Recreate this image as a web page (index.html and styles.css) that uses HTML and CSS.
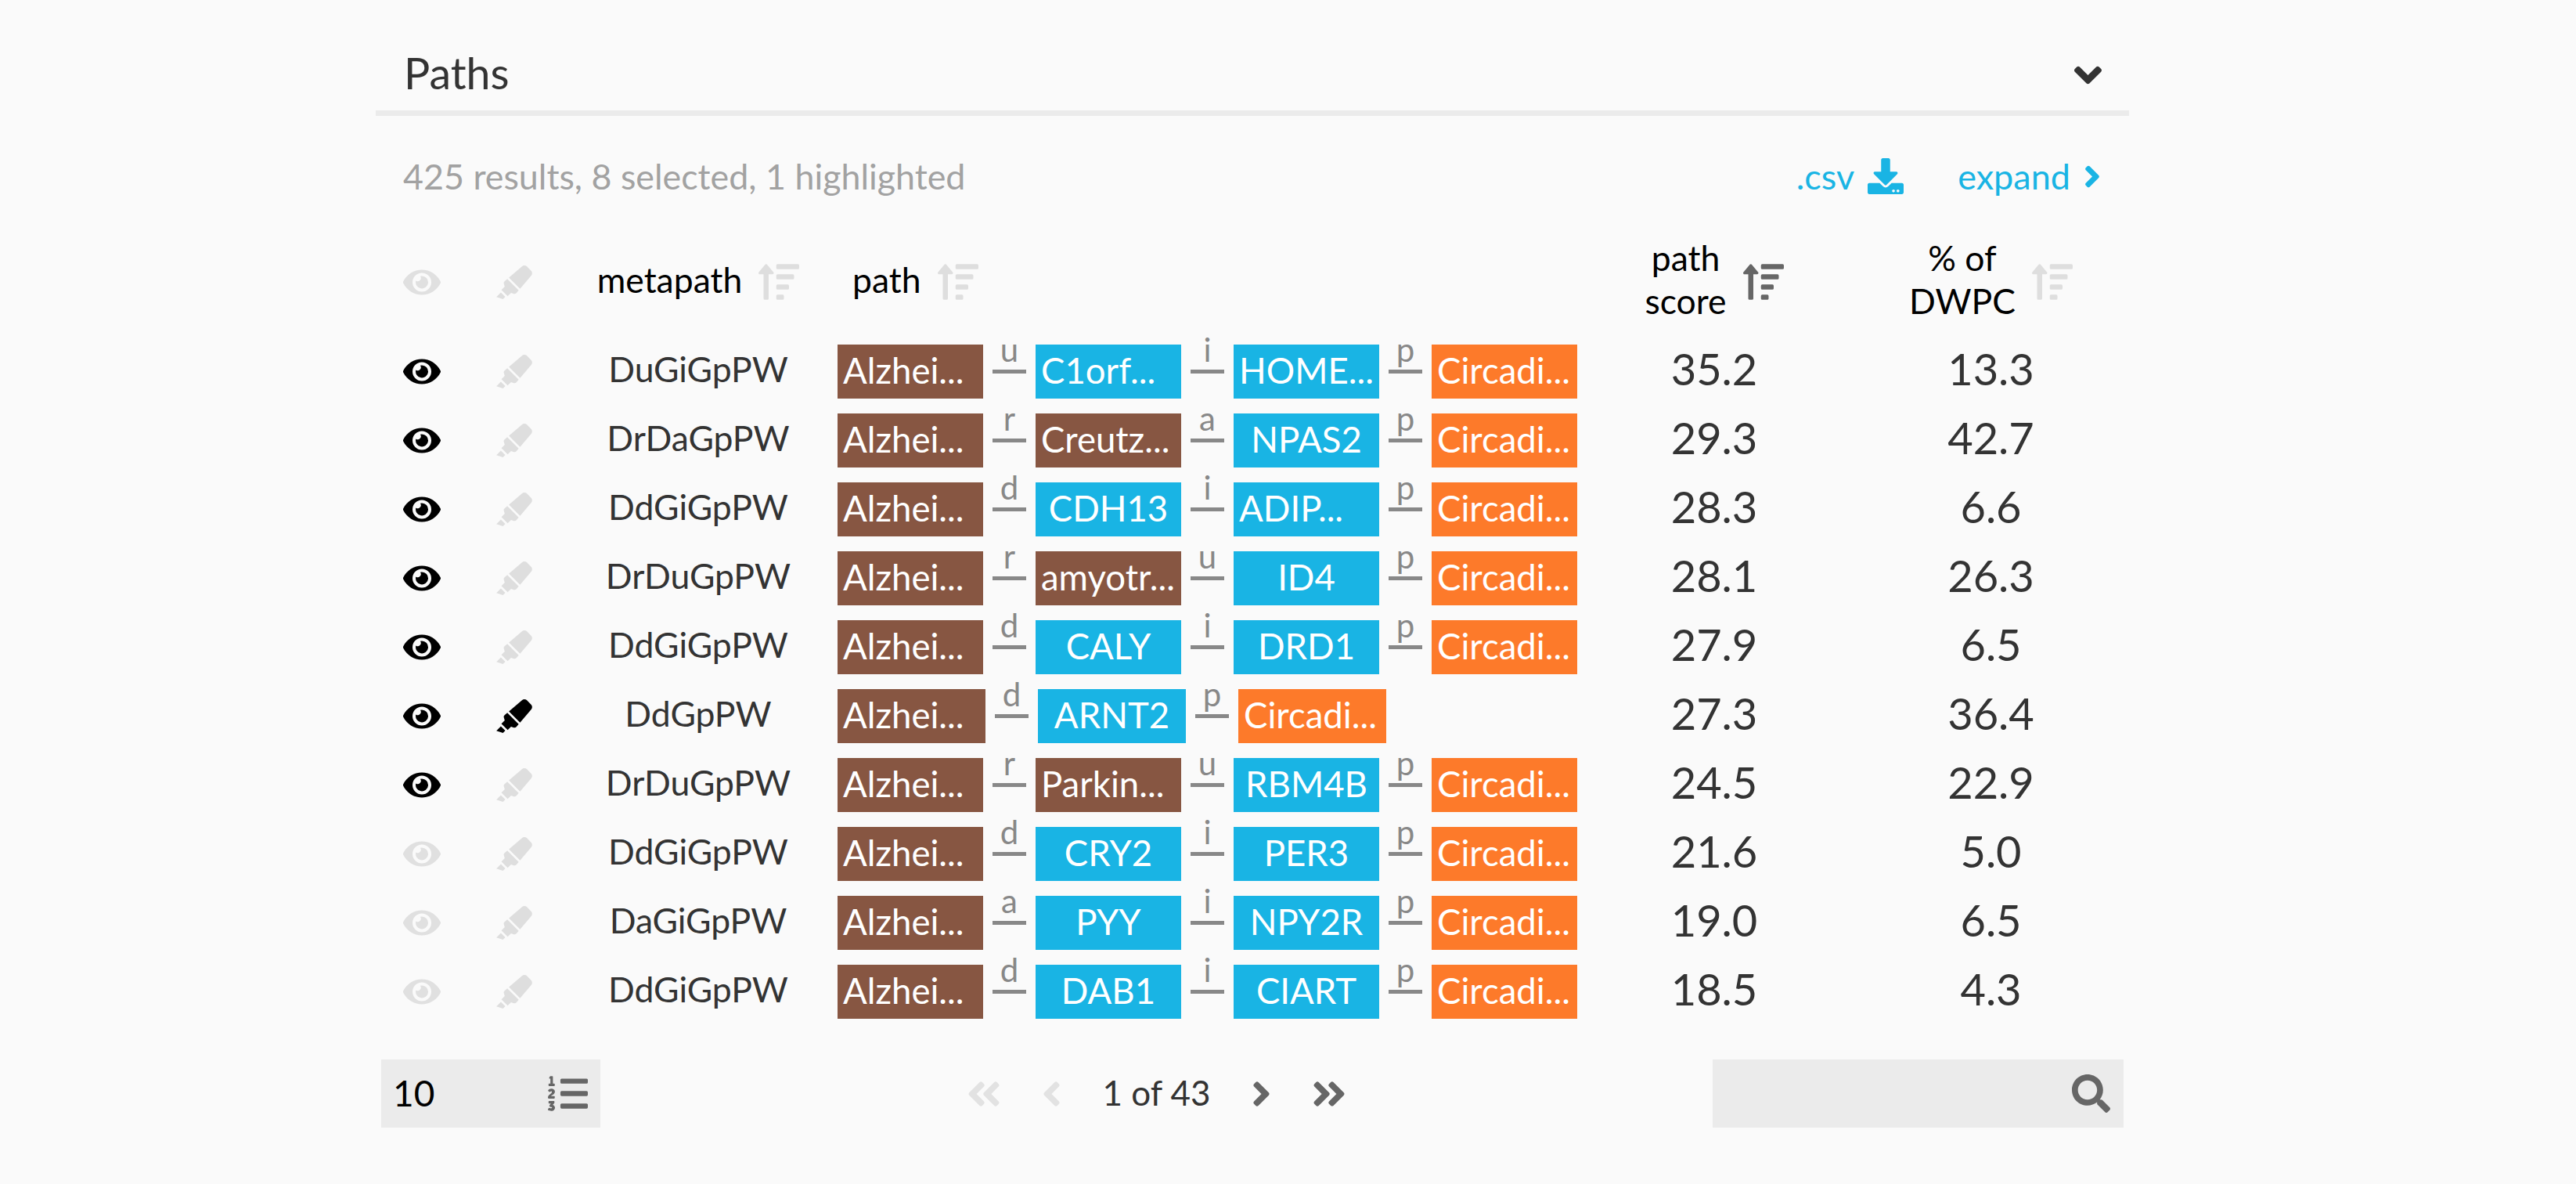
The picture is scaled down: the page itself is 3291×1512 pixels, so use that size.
FILE: index.html
```html
<!DOCTYPE html>
<html>
<head>
    <meta charset="UTF-8">
    <title>Paths</title>
    <link rel="stylesheet" href="styles.css">
</head>
<body>
    <!-- icon set, used below with <use> -->
    <svg class="defs" xmlns="http://www.w3.org/2000/svg">
        <symbol id="eye" viewBox="0 0 576 512"><path d="M572.52 241.4C518.29 135.59 410.93 64 288 64S57.68 135.64 3.48 241.41a32.35 32.35 0 0 0 0 29.19C57.71 376.41 165.07 448 288 448s230.32-71.64 284.52-177.41a32.35 32.35 0 0 0 0-29.19zM288 400a144 144 0 1 1 144-144 143.93 143.93 0 0 1-144 144zm0-240a95.31 95.31 0 0 0-25.31 3.79 47.85 47.85 0 0 1-66.9 66.9A95.78 95.78 0 1 0 288 160z"/></symbol>
        <symbol id="marker" viewBox="0 0 544 512"><path d="M0 479.98L99.92 512l35.45-35.45-67.04-67.04L0 479.98zm124.61-240.01a36.592 36.592 0 0 0-10.79 38.1l13.05 42.83-50.93 50.94 96.23 96.23 50.86-50.86 42.74 13.08c13.73 4.2 28.65-.01 38.15-10.78l35.55-41.64-173.34-173.34-41.52 35.64zm403.31-160.7l-63.2-63.2c-20.49-20.49-53.38-21.52-75.12-2.35L190.55 183.68l169.77 169.78L530.27 154.4c19.18-21.74 18.15-54.63-2.35-75.13z"/></symbol>
        <symbol id="sort" viewBox="0 0 512 512"><path d="M304 416h-64a16 16 0 0 0-16 16v32a16 16 0 0 0 16 16h64a16 16 0 0 0 16-16v-32a16 16 0 0 0-16-16zM16 160h48v304a16 16 0 0 0 16 16h32a16 16 0 0 0 16-16V160h48c14.21 0 21.38-17.24 11.31-27.31l-80-96a16 16 0 0 0-22.62 0l-80 96C-5.35 142.74 1.77 160 16 160zm416 0H240a16 16 0 0 0-16 16v32a16 16 0 0 0 16 16h192a16 16 0 0 0 16-16v-32a16 16 0 0 0-16-16zm-64 128H240a16 16 0 0 0-16 16v32a16 16 0 0 0 16 16h128a16 16 0 0 0 16-16v-32a16 16 0 0 0-16-16zM496 32H240a16 16 0 0 0-16 16v32a16 16 0 0 0 16 16h256a16 16 0 0 0 16-16V48a16 16 0 0 0-16-16z"/></symbol>
        <symbol id="download" viewBox="0 0 512 512"><path d="M216 0h80c13.3 0 24 10.7 24 24v168h87.7c17.8 0 26.7 21.5 14.1 34.1L269.7 378.3c-7.5 7.5-19.8 7.5-27.3 0L90.1 226.1c-12.6-12.6-3.7-34.1 14.1-34.1H192V24c0-13.3 10.7-24 24-24zm296 376v112c0 13.3-10.7 24-24 24H24c-13.3 0-24-10.7-24-24V376c0-13.3 10.7-24 24-24h146.7l49 49c20.1 20.1 52.5 20.1 72.6 0l49-49H488c13.3 0 24 10.7 24 24zm-124 88c0-11-9-20-20-20s-20 9-20 20 9 20 20 20 20-9 20-20zm64 0c0-11-9-20-20-20s-20 9-20 20 9 20 20 20 20-9 20-20z"/></symbol>
        <symbol id="angleDown" viewBox="0 0 320 512"><path d="M143 352.3L7 216.3c-9.4-9.4-9.4-24.6 0-33.9l22.6-22.6c9.4-9.4 24.6-9.4 33.9 0l96.4 96.4 96.4-96.4c9.4-9.4 24.6-9.4 33.9 0l22.6 22.6c9.4 9.4 9.4 24.6 0 33.9l-136 136c-9.2 9.4-24.4 9.4-33.8 0z"/></symbol>
        <symbol id="doubleLeft" viewBox="0 0 448 512"><path d="M223.7 239l136-136c9.4-9.4 24.6-9.4 33.9 0l22.6 22.6c9.4 9.4 9.4 24.6 0 33.9L319.9 256l96.4 96.4c9.4 9.4 9.4 24.6 0 33.9L393.7 409c-9.4 9.4-24.6 9.4-33.9 0l-136-136c-9.5-9.4-9.5-24.6-.1-34zm-192 34l136 136c9.4 9.4 24.6 9.4 33.9 0l22.6-22.6c9.4-9.4 9.4-24.6 0-33.9L127.9 256l96.4-96.4c9.4-9.4 9.4-24.6 0-33.9L201.7 103c-9.4-9.4-24.6-9.4-33.9 0l-136 136c-9.5 9.4-9.5 24.6-.1 34z"/></symbol>
        <symbol id="doubleRight" viewBox="0 0 448 512"><path d="M224.3 273l-136 136c-9.4 9.4-24.6 9.4-33.9 0l-22.6-22.6c-9.4-9.4-9.4-24.6 0-33.9l96.4-96.4-96.4-96.4c-9.4-9.4-9.4-24.6 0-33.9L54.3 103c9.4-9.4 24.6-9.4 33.9 0l136 136c9.5 9.4 9.5 24.6.1 34zm192-34l-136-136c-9.4-9.4-24.6-9.4-33.9 0l-22.6 22.6c-9.4 9.4-9.4 24.6 0 33.9l96.4 96.4-96.4 96.4c-9.4 9.4-9.4 24.6 0 33.9l22.6 22.6c9.4 9.4 24.6 9.4 33.9 0l136-136c9.4-9.2 9.4-24.4 0-33.8z"/></symbol>
        <symbol id="angleLeft" viewBox="0 0 256 512"><path d="M31.7 239l136-136c9.4-9.4 24.6-9.4 33.9 0l22.6 22.6c9.4 9.4 9.4 24.6 0 33.9L127.9 256l96.4 96.4c9.4 9.4 9.4 24.6 0 33.9L201.7 409c-9.4 9.4-24.6 9.4-33.9 0l-136-136c-9.5-9.4-9.5-24.6-.1-34z"/></symbol>
        <symbol id="angleRight" viewBox="0 0 256 512"><path d="M224.3 273l-136 136c-9.4 9.4-24.6 9.4-33.9 0l-22.6-22.6c-9.4-9.4-9.4-24.6 0-33.9l96.4-96.4-96.4-96.4c-9.4-9.4-9.4-24.6 0-33.9L54.3 103c9.4-9.4 24.6-9.4 33.9 0l136 136c9.5 9.4 9.5 24.6.1 34z"/></symbol>
        <symbol id="search" viewBox="0 0 512 512"><path d="M505 442.7L405.3 343c-4.5-4.5-10.6-7-17-7H372c27.6-35.3 44-79.7 44-128C416 93.1 322.9 0 208 0S0 93.1 0 208s93.1 208 208 208c48.3 0 92.7-16.4 128-44v16.3c0 6.4 2.5 12.5 7 17l99.7 99.7c9.4 9.4 24.6 9.4 33.9 0l28.3-28.3c9.4-9.4 9.4-24.6.1-34zM208 336c-70.7 0-128-57.2-128-128 0-70.7 57.2-128 128-128 70.7 0 128 57.2 128 128 0 70.7-57.2 128-128 128z"/></symbol>
        <symbol id="listOl" viewBox="0 0 512 512"><path d="M61.77 401l17.5-20.15a19.92 19.92 0 0 0 5.07-14.19v-3.31C84.34 356 80.5 352 73 352H16a8 8 0 0 0-8 8v16a8 8 0 0 0 8 8h22.83a157.41 157.41 0 0 0-11 12.31l-5.61 7c-4 5.07-5.25 10.13-2.8 14.88l1.05 1.93c3 5.76 6.29 7.88 12.25 7.88h4.73c10.33 0 15.94 2.44 15.94 9.09 0 4.72-4.2 8.22-14.36 8.22a41.54 41.54 0 0 1-15.47-3.12c-6.49-3.88-11.74-3.5-15.6 3.12l-5.59 9.31c-3.72 6.13-3.19 11.72 2.63 15.94 7.71 4.69 20.38 9.44 37 9.44 34.16 0 48.5-22.75 48.5-44.12-.03-14.38-9.12-29.76-28.73-34.88zM496 224H176a16 16 0 0 0-16 16v32a16 16 0 0 0 16 16h320a16 16 0 0 0 16-16v-32a16 16 0 0 0-16-16zm0-160H176a16 16 0 0 0-16 16v32a16 16 0 0 0 16 16h320a16 16 0 0 0 16-16V80a16 16 0 0 0-16-16zm0 320H176a16 16 0 0 0-16 16v32a16 16 0 0 0 16 16h320a16 16 0 0 0 16-16v-32a16 16 0 0 0-16-16zM16 160h64a8 8 0 0 0 8-8v-16a8 8 0 0 0-8-8H64V40a8 8 0 0 0-8-8H32a8 8 0 0 0-7.14 4.42l-8 16A8 8 0 0 0 24 64h8v64H16a8 8 0 0 0-8 8v16a8 8 0 0 0 8 8zm-3.91 160H80a8 8 0 0 0 8-8v-16a8 8 0 0 0-8-8H41.32c3.29-10.29 48.34-18.68 48.34-56.44 0-29.06-25-39.56-44.47-39.56-21.36 0-33.8 10-40.46 18.75-4.37 5.59-3 10.84 2.8 15.37l8.58 6.88c5.61 4.56 11 2.47 16.12-2.44a13.44 13.44 0 0 1 9.46-3.84c3.33 0 9.28 1.56 9.28 8.75C51 258.14.26 267.11 0 307.57v4c0 5.43 3.8 8.43 12.09 8.43z"/></symbol>
    </svg>

    <main class="panel">
        <header class="panelHead">
            <h1>Paths</h1>
            <svg class="icoCollapse"><use href="#angleDown"/></svg>
        </header>

        <section class="infoBar">
            <span class="count">425 results, 8 selected, 1 highlighted</span>
            <span class="actions">
                <a class="csv">.csv <svg class="icoDownload"><use href="#download"/></svg></a>
                <a class="expand">expand <svg class="icoChevron"><use href="#angleRight"/></svg></a>
            </span>
        </section>

        <table class="paths">
            <colgroup>
                <col class="cEye"><col class="cMark"><col class="cMeta"><col class="cPath"><col class="cScore"><col class="cDwpc">
            </colgroup>
            <thead>
                <tr>
                    <th><svg class="eye off"><use href="#eye"/></svg></th>
                    <th><svg class="mark off"><use href="#marker"/></svg></th>
                    <th><div class="th"><span>metapath</span><svg class="sort off"><use href="#sort"/></svg></div></th>
                    <th><div class="th thPath"><span>path</span><svg class="sort off"><use href="#sort"/></svg></div></th>
                    <th><div class="th"><span>path<br>score</span><svg class="sort"><use href="#sort"/></svg></div></th>
                    <th><div class="th"><span>% of<br>DWPC</span><svg class="sort off"><use href="#sort"/></svg></div></th>
                </tr>
            </thead>
            <tbody>
                <tr>
                    <td><svg class="eye"><use href="#eye"/></svg></td>
                    <td><svg class="mark off"><use href="#marker"/></svg></td>
                    <td class="meta">DuGiGpPW</td>
                    <td><div class="path">
                        <span class="node disease cut">Alzhei...</span><span class="edge"><i>u</i><b></b></span>
                        <span class="node gene cut">C1orf...</span><span class="edge"><i>i</i><b></b></span>
                        <span class="node gene cut">HOME...</span><span class="edge"><i>p</i><b></b></span>
                        <span class="node pathway cut">Circadi...</span>
                    </div></td>
                    <td class="num">35.2</td>
                    <td class="num">13.3</td>
                </tr>
                <tr>
                    <td><svg class="eye"><use href="#eye"/></svg></td>
                    <td><svg class="mark off"><use href="#marker"/></svg></td>
                    <td class="meta">DrDaGpPW</td>
                    <td><div class="path">
                        <span class="node disease cut">Alzhei...</span><span class="edge"><i>r</i><b></b></span>
                        <span class="node disease cut">Creutz...</span><span class="edge"><i>a</i><b></b></span>
                        <span class="node gene">NPAS2</span><span class="edge"><i>p</i><b></b></span>
                        <span class="node pathway cut">Circadi...</span>
                    </div></td>
                    <td class="num">29.3</td>
                    <td class="num">42.7</td>
                </tr>
                <tr>
                    <td><svg class="eye"><use href="#eye"/></svg></td>
                    <td><svg class="mark off"><use href="#marker"/></svg></td>
                    <td class="meta">DdGiGpPW</td>
                    <td><div class="path">
                        <span class="node disease cut">Alzhei...</span><span class="edge"><i>d</i><b></b></span>
                        <span class="node gene">CDH13</span><span class="edge"><i>i</i><b></b></span>
                        <span class="node gene cut">ADIP...</span><span class="edge"><i>p</i><b></b></span>
                        <span class="node pathway cut">Circadi...</span>
                    </div></td>
                    <td class="num">28.3</td>
                    <td class="num">6.6</td>
                </tr>
                <tr>
                    <td><svg class="eye"><use href="#eye"/></svg></td>
                    <td><svg class="mark off"><use href="#marker"/></svg></td>
                    <td class="meta">DrDuGpPW</td>
                    <td><div class="path">
                        <span class="node disease cut">Alzhei...</span><span class="edge"><i>r</i><b></b></span>
                        <span class="node disease cut">amyotr...</span><span class="edge"><i>u</i><b></b></span>
                        <span class="node gene">ID4</span><span class="edge"><i>p</i><b></b></span>
                        <span class="node pathway cut">Circadi...</span>
                    </div></td>
                    <td class="num">28.1</td>
                    <td class="num">26.3</td>
                </tr>
                <tr>
                    <td><svg class="eye"><use href="#eye"/></svg></td>
                    <td><svg class="mark off"><use href="#marker"/></svg></td>
                    <td class="meta">DdGiGpPW</td>
                    <td><div class="path">
                        <span class="node disease cut">Alzhei...</span><span class="edge"><i>d</i><b></b></span>
                        <span class="node gene">CALY</span><span class="edge"><i>i</i><b></b></span>
                        <span class="node gene">DRD1</span><span class="edge"><i>p</i><b></b></span>
                        <span class="node pathway cut">Circadi...</span>
                    </div></td>
                    <td class="num">27.9</td>
                    <td class="num">6.5</td>
                </tr>
                <tr>
                    <td><svg class="eye"><use href="#eye"/></svg></td>
                    <td><svg class="mark"><use href="#marker"/></svg></td>
                    <td class="meta">DdGpPW</td>
                    <td><div class="path short">
                        <span class="node disease cut">Alzhei...</span><span class="edge"><i>d</i><b></b></span>
                        <span class="node gene">ARNT2</span><span class="edge"><i>p</i><b></b></span>
                        <span class="node pathway cut">Circadi...</span>
                    </div></td>
                    <td class="num">27.3</td>
                    <td class="num">36.4</td>
                </tr>
                <tr>
                    <td><svg class="eye"><use href="#eye"/></svg></td>
                    <td><svg class="mark off"><use href="#marker"/></svg></td>
                    <td class="meta">DrDuGpPW</td>
                    <td><div class="path">
                        <span class="node disease cut">Alzhei...</span><span class="edge"><i>r</i><b></b></span>
                        <span class="node disease cut">Parkin...</span><span class="edge"><i>u</i><b></b></span>
                        <span class="node gene">RBM4B</span><span class="edge"><i>p</i><b></b></span>
                        <span class="node pathway cut">Circadi...</span>
                    </div></td>
                    <td class="num">24.5</td>
                    <td class="num">22.9</td>
                </tr>
                <tr>
                    <td><svg class="eye off"><use href="#eye"/></svg></td>
                    <td><svg class="mark off"><use href="#marker"/></svg></td>
                    <td class="meta">DdGiGpPW</td>
                    <td><div class="path">
                        <span class="node disease cut">Alzhei...</span><span class="edge"><i>d</i><b></b></span>
                        <span class="node gene">CRY2</span><span class="edge"><i>i</i><b></b></span>
                        <span class="node gene">PER3</span><span class="edge"><i>p</i><b></b></span>
                        <span class="node pathway cut">Circadi...</span>
                    </div></td>
                    <td class="num">21.6</td>
                    <td class="num">5.0</td>
                </tr>
                <tr>
                    <td><svg class="eye off"><use href="#eye"/></svg></td>
                    <td><svg class="mark off"><use href="#marker"/></svg></td>
                    <td class="meta">DaGiGpPW</td>
                    <td><div class="path">
                        <span class="node disease cut">Alzhei...</span><span class="edge"><i>a</i><b></b></span>
                        <span class="node gene">PYY</span><span class="edge"><i>i</i><b></b></span>
                        <span class="node gene">NPY2R</span><span class="edge"><i>p</i><b></b></span>
                        <span class="node pathway cut">Circadi...</span>
                    </div></td>
                    <td class="num">19.0</td>
                    <td class="num">6.5</td>
                </tr>
                <tr>
                    <td><svg class="eye off"><use href="#eye"/></svg></td>
                    <td><svg class="mark off"><use href="#marker"/></svg></td>
                    <td class="meta">DdGiGpPW</td>
                    <td><div class="path">
                        <span class="node disease cut">Alzhei...</span><span class="edge"><i>d</i><b></b></span>
                        <span class="node gene">DAB1</span><span class="edge"><i>i</i><b></b></span>
                        <span class="node gene">CIART</span><span class="edge"><i>p</i><b></b></span>
                        <span class="node pathway cut">Circadi...</span>
                    </div></td>
                    <td class="num">18.5</td>
                    <td class="num">4.3</td>
                </tr>
            </tbody>
        </table>

        <footer class="controls">
            <div class="perPage">
                <span>10</span>
                <svg class="icoList"><use href="#listOl"/></svg>
            </div>
            <div class="pager">
                <svg class="icoDouble off"><use href="#doubleLeft"/></svg>
                <svg class="icoAngle off"><use href="#angleLeft"/></svg>
                <span>1 of 43</span>
                <svg class="icoAngle"><use href="#angleRight"/></svg>
                <svg class="icoDouble"><use href="#doubleRight"/></svg>
            </div>
            <div class="searchBox">
                <svg class="icoSearch"><use href="#search"/></svg>
            </div>
        </footer>
    </main>
</body>
</html>
```

FILE: styles.css
```css
:root {
    --blue: rgb(25, 180, 228);
    --brown: rgb(135, 86, 66);
    --orange: rgb(253, 122, 42);
    --iconGrey: #666666;
    --iconOff: #dedede;
    --boxGrey: #ebebeb;
}

* { box-sizing: border-box; }

body {
    margin: 0;
    background-color: #fafafa;
    color: #333333;
    font-family: "Lato", "Open Sans", sans-serif;
}

svg { fill: currentColor; flex: none; }
.defs { display: none; }

.panel {
    width: 2240px;
    margin-left: 480px;
}

/*---------- title ----------*/
.panelHead {
    display: flex;
    justify-content: space-between;
    align-items: center;
    height: 148px;
    padding: 44px 35px 0 36px;
    border-bottom: 7px solid var(--boxGrey);
}
.panelHead h1 {
    margin: 0;
    font-size: 55.5px;
    font-weight: 400;
}
.icoCollapse { width: 35px; height: 56px; margin-top: 6px; }

/*---------- results line ----------*/
.infoBar {
    display: flex;
    justify-content: space-between;
    align-items: center;
    height: 142px;
    padding: 12px 36px 0 35px;
    font-size: 45px;
}
.count { font-size: 44.8px; color: #a2a2a2; }
.actions {
    display: flex;
    align-items: center;
    gap: 22px;
    color: var(--blue);
}
.actions a { display: flex; align-items: center; gap: 17px; }
.icoDownload { width: 46px; height: 46px; margin-right: 47px; }
.icoChevron { width: 22px; height: 45px; }

/*---------- table ----------*/
.paths {
    width: 2240px;
    table-layout: fixed;
    border-collapse: collapse;
}
.cEye, .cMark { width: 118px; }
.cMeta { width: 352px; }
.cPath { width: 945px; }
.cScore { width: 354px; }
.cDwpc { width: 353px; }

.paths th {
    height: 140px;
    padding: 0;
    font-size: 44.5px;
    font-weight: 400;
    line-height: 55px;
    color: #000000;
}
.paths td {
    height: 88px;
    padding: 0;
    text-align: center;
}
.paths td.meta {
    padding-bottom: 8px;
    font-size: 44.5px;
}
.paths td.num {
    padding-bottom: 8px;
    font-size: 56px;
}

.th {
    display: flex;
    justify-content: center;
    align-items: center;
    gap: 21px;
}
.th span { padding-bottom: 8px; }
.thPath { justify-content: flex-start; padding-left: 21px; }

.eye { display: block; width: 48px; height: 43px; margin: 0 auto; color: #000000; }
.mark { display: block; width: 46px; height: 43px; margin: 0 auto; color: #000000; }
.sort { width: 52px; height: 52px; color: var(--iconGrey); }
.off { color: var(--iconOff); }
.eye.off { color: #e0e0e0; }

/*---------- path chain ----------*/
.path {
    display: flex;
    align-items: flex-start;
    margin-left: 2px;
}
.node {
    flex: none;
    width: 186px;
    height: 69px;
    line-height: 65px;
    font-size: 45.5px;
    color: #ffffff;
    text-align: center;
    white-space: nowrap;
    overflow: hidden;
}
.short .node { width: 189px; }
.node.cut { text-align: left; padding-left: 7px; }
.disease { background-color: var(--brown); }
.gene { background-color: var(--blue); }
.pathway { background-color: var(--orange); }

.edge {
    flex: none;
    display: flex;
    flex-direction: column;
    align-items: center;
    width: 67px;
    height: 69px;
}
.edge i {
    display: flex;
    align-items: flex-end;
    justify-content: center;
    height: 32px;
    padding-bottom: 5px;
    font-size: 42px;
    font-style: normal;
    line-height: 42px;
    color: #888888;
}
.edge b {
    display: block;
    width: 43px;
    height: 5px;
    background-color: #888888;
}

/*---------- bottom controls ----------*/
.controls {
    display: flex;
    justify-content: space-between;
    align-items: center;
    margin-top: 43px;
    padding: 0 7px;
}
.perPage, .searchBox {
    display: flex;
    align-items: center;
    height: 87px;
    background-color: var(--boxGrey);
}
.perPage {
    justify-content: space-between;
    width: 280px;
    padding: 0 16px 0 15px;
    font-size: 46px;
    color: #000000;
}
.perPage span { padding-bottom: 3px; }
.searchBox {
    justify-content: flex-end;
    width: 525px;
    padding-right: 17px;
    color: var(--iconGrey);
}
.icoList { width: 51px; height: 51px; color: var(--iconGrey); }
.icoSearch { width: 49px; height: 49px; }

.pager {
    display: flex;
    align-items: center;
    gap: 52px;
    font-size: 44px;
    color: var(--iconGrey);
}
.pager span { padding-bottom: 3px; color: #333333; }
.icoDouble { width: 44px; height: 50px; }
.icoAngle { width: 25px; height: 50px; }
.pager .off { color: #e2e2e2; }
```
